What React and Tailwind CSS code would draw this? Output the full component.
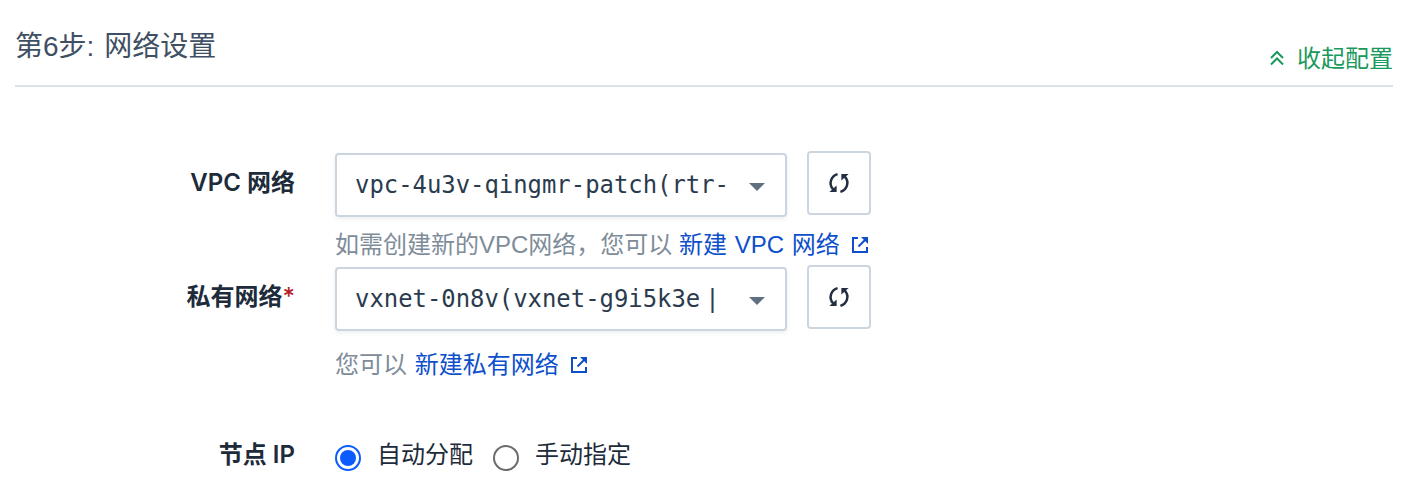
import React from "react";

const sans = "font-['Liberation_Sans','Noto_Sans_CJK_SC',sans-serif]";

function RefreshButton() {
  return (
    <button
      aria-label="刷新"
      className="mt-px ml-5 flex h-16 w-16 shrink-0 items-center justify-center rounded-[4px] border-2 border-[#cbd5e0] bg-white"
    >
      <svg className="h-6 w-6" viewBox="0 0 24 24" fill="none">
        <path d="M10.6 3.1C4.2 5 1 12.6 6.2 18.4" stroke="#242e42" strokeWidth="2.5" />
        <path d="M13.4 20.9C19.8 19 23 11.4 17.8 5.6" stroke="#242e42" strokeWidth="2.5" />
        <path d="M2.4 21h7.2v-6.6z" fill="#242e42" />
        <path d="M21.6 3h-7.2v6.6z" fill="#242e42" />
      </svg>
    </button>
  );
}

function Select({ children }) {
  return (
    <div className="mt-[3px] flex h-16 w-[452px] items-center rounded-[4px] border-2 border-[#cbd5e0] bg-white pl-[18px] shadow-[0_2px_4px_rgba(36,46,66,0.08)]">
      <span className="w-[394px] shrink-0 overflow-hidden whitespace-pre font-['DejaVu_Sans_Mono',monospace] text-[23.9px] leading-8 text-[#2b3b4e]">
        {children}
      </span>
      <svg className="mt-1 h-2 w-4 shrink-0" viewBox="0 0 16 8">
        <path d="M0 0h16L8 8z" fill="#5f7080" />
      </svg>
    </div>
  );
}

function Link({ children }) {
  return (
    <a className="flex items-center text-[#0d4fcb] [word-spacing:1px]">
      {children}
      <svg className="ml-[11px] h-[18px] w-[18px]" viewBox="0 0 18 18" fill="none">
        <path d="M7 2H2v14h14v-5" stroke="currentColor" strokeWidth="2" />
        <path d="M10 1h7v7z" fill="currentColor" />
        <path d="M7.5 10.5l7-7" stroke="currentColor" strokeWidth="2" />
      </svg>
    </a>
  );
}

function Label({ children }) {
  return (
    <div className="flex w-[280px] shrink-0 justify-end whitespace-pre font-['Inter','Noto_Sans_CJK_SC',sans-serif] text-[24px] font-semibold leading-9 text-[#1d2b3a]">
      {children}
    </div>
  );
}

function Radio({ checked, children }) {
  return (
    <label className="flex items-center">
      <span
        className={
          checked
            ? "mt-[5px] flex h-[26px] w-[26px] items-center justify-center rounded-full border-2 border-[#0b5cff]"
            : "mt-[5px] flex h-[26px] w-[26px] items-center justify-center rounded-full border-2 border-[#6b6b6b]"
        }
      >
        {checked && <span className="h-4 w-4 rounded-full bg-[#0b5cff]" />}
      </span>
      <span className="ml-4">{children}</span>
    </label>
  );
}

export default function App() {
  return (
    <div className={`h-[502px] overflow-hidden bg-white px-[15px] pr-[17px] ${sans}`}>
      <header className="flex h-[87px] justify-between border-b-2 border-[#dbe2ea]">
        <h2 className="mt-[27px] text-[28px] leading-10 font-normal text-[#3f5064] [word-spacing:2px]">第6步: 网络设置</h2>
        <a className="mt-[41px] flex h-9 items-center text-[24px] text-[#19995c]">
          <svg className="mr-[11px] mb-0.5 h-[18px] w-[18px]" viewBox="0 0 18 18" fill="none" stroke="currentColor" strokeWidth="2">
            <path d="M3 9l6-6 6 6M3 15.5l6-6 6 6" />
          </svg>
          收起配置
        </a>
      </header>

      <div className="mt-[63px] flex h-[114px]">
        <div className="mt-[15px]"><Label>VPC 网络</Label></div>
        <div className="ml-10">
          <div className="flex">
            <Select>vpc-4u3v-qingmr-patch(rtr-</Select>
            <RefreshButton />
          </div>
          <div className="mt-2.5 flex h-9 items-center whitespace-pre text-[24px] text-[#7e8c99]">
            {"如需创建新的VPC网络，您可以 "}
            <Link>新建 VPC 网络</Link>
          </div>
        </div>
      </div>

      <div className="flex h-[158px]">
        <div className="mt-[15px]">
          <Label>私有网络<span className="font-medium text-[#b81d24]">*</span></Label>
        </div>
        <div className="ml-10">
          <div className="flex">
            <Select>vxnet-0n8v(vxnet-g9i5k3e<span className="tracking-[-9.4px]"> </span>|</Select>
            <RefreshButton />
          </div>
          <div className="mt-4 flex h-9 items-center whitespace-pre text-[24px] text-[#7e8c99] [word-spacing:1px]">
            {"您可以 "}
            <Link>新建私有网络</Link>
          </div>
        </div>
      </div>

      <div className="mt-[15px] flex">
        <Label>节点 IP</Label>
        <div className="ml-10 flex h-9 items-center gap-5 text-[24px] text-[#1d2b3a]">
          <Radio checked>自动分配</Radio>
          <Radio>手动指定</Radio>
        </div>
      </div>
    </div>
  );
}
